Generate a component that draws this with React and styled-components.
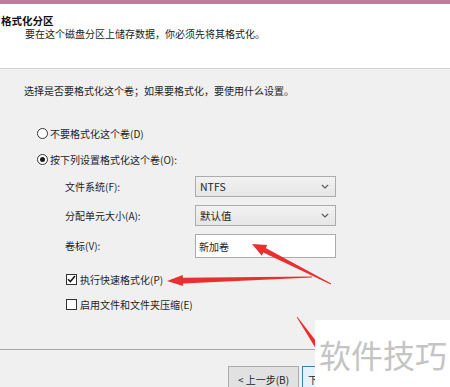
import React from "react";
import styled, { createGlobalStyle } from "styled-components";

const GlobalStyle = createGlobalStyle`
  body {
    margin: 0;
    background: #f0f0f0;
    font-family: "Noto Sans CJK SC", "Noto Sans", sans-serif;
    color: #1e1e1e;
  }
`;

// tapered arrow polygon: thin tail, thicker shaft near the head, triangle tip
function arrowPoints(tail, tip, headLen, headHalf, neckHalf, tailHalf) {
  const dx = tip[0] - tail[0];
  const dy = tip[1] - tail[1];
  const len = Math.hypot(dx, dy);
  const ux = dx / len;
  const uy = dy / len;
  const nx = -uy;
  const ny = ux;
  const bx = tip[0] - ux * headLen;
  const by = tip[1] - uy * headLen;
  const pts = [
    [tail[0] + nx * tailHalf, tail[1] + ny * tailHalf],
    [bx + nx * neckHalf, by + ny * neckHalf],
    [bx + nx * headHalf, by + ny * headHalf],
    tip,
    [bx - nx * headHalf, by - ny * headHalf],
    [bx - nx * neckHalf, by - ny * neckHalf],
    [tail[0] - nx * tailHalf, tail[1] - ny * tailHalf],
  ];
  return pts.map((p) => p.map((v) => v.toFixed(1)).join(",")).join(" ");
}

const arrows = [
  { tail: [331, 284], tip: [252, 244], head: 14, half: 6, neck: 2.6, end: 0.4 },
  { tail: [312, 277], tip: [167, 281], head: 16, half: 5.5, neck: 2.8, end: 0.4 },
  { tail: [297, 317], tip: [328, 362], head: 14, half: 6, neck: 2.6, end: 0.4 },
];

function App() {
  return (
    <Page>
      <GlobalStyle />
      <TopBar />
      <Header>
        <Title>格式化分区</Title>
        <Subtitle>要在这个磁盘分区上储存数据，你必须先将其格式化。</Subtitle>
      </Header>

      <Body>
        <Intro>选择是否要格式化这个卷；如果要格式化，要使用什么设置。</Intro>

        <RadioList>
          <RadioRow>
            <Radio />
            不要格式化这个卷(D)
          </RadioRow>
          <RadioRow>
            <Radio checked />
            按下列设置格式化这个卷(O):
          </RadioRow>
        </RadioList>

        <FormGrid>
          <Label>文件系统(F):</Label>
          <Select>
            NTFS
            <Chevron />
          </Select>
          <Label>分配单元大小(A):</Label>
          <Select>
            默认值
            <Chevron />
          </Select>
          <Label>卷标(V):</Label>
          <TextBox>新加卷</TextBox>
        </FormGrid>

        <CheckList>
          <CheckRow>
            <Check>
              <svg width="9" height="8" viewBox="0 0 9 8">
                <polyline points="1,4.2 3.4,6.6 8,1" fill="none" stroke="#1a1a1a" strokeWidth="1.6" />
              </svg>
            </Check>
            执行快速格式化(P)
          </CheckRow>
          <CheckRow>
            <Check />
            启用文件和文件夹压缩(E)
          </CheckRow>
        </CheckList>
      </Body>

      <Footer>
        <Button>&lt; 上一步(B)</Button>
        <Button primary>下</Button>
      </Footer>

      <ArrowLayer width="450" height="387" viewBox="0 0 450 387">
        {arrows.map((a, i) => (
          <polygon key={i} points={arrowPoints(a.tail, a.tip, a.head, a.half, a.neck, a.end)} fill="#e8302f" />
        ))}
      </ArrowLayer>

      <Watermark>软件技巧</Watermark>
    </Page>
  );
}

function Chevron() {
  return (
    <ChevronIcon width="8" height="5" viewBox="0 0 8 5">
      <polyline points="0.8,0.8 4,4 7.2,0.8" fill="none" stroke="#555" strokeWidth="1.2" />
    </ChevronIcon>
  );
}

export default App;

const Page = styled.div`
  position: relative;
  width: 450px;
  height: 387px;
  overflow: hidden;
  display: flex;
  flex-direction: column;
  font-size: 10px;
`;

const TopBar = styled.div`
  height: 4px;
  background: #c17a9b;
  flex: none;
`;

const Header = styled.div`
  flex: none;
  box-sizing: border-box;
  height: 65px;
  background: #fff;
  border-bottom: 1px solid #d4d4d4;
  padding: 10px 0 0 1px;
`;

const Title = styled.div`
  font-size: 10.5px;
  font-weight: 700;
  line-height: 14px;
  color: #111;
`;

const Subtitle = styled.div`
  line-height: 12px;
  padding-left: 24px;
  color: #222;
`;

const Body = styled.div`
  flex: none;
  box-sizing: border-box;
  height: 281px;
  border-bottom: 1px solid #a8a8a8;
  padding: 15px 0 0 24px;
`;

const Intro = styled.div`
  line-height: 14px;
`;

const RadioList = styled.div`
  display: flex;
  flex-direction: column;
  gap: 6px;
  margin: 25px 0 0 13px;
`;

const RadioRow = styled.div`
  display: flex;
  align-items: center;
  gap: 2px;
  height: 20px;
`;

const Radio = styled.span`
  box-sizing: border-box;
  width: 11px;
  height: 11px;
  border: 1px solid #333;
  border-radius: 50%;
  background: #fff;
  position: relative;
  &::after {
    content: "";
    display: ${(p) => (p.checked ? "block" : "none")};
    position: absolute;
    left: 2px;
    top: 2px;
    width: 5px;
    height: 5px;
    border-radius: 50%;
    background: #1a1a1a;
  }
`;

const FormGrid = styled.div`
  display: grid;
  grid-template-columns: 130px 141px;
  row-gap: 8px;
  align-items: center;
  margin: 7px 0 0 41px;
`;

const Label = styled.div`
  line-height: 14px;
`;

const Select = styled.div`
  box-sizing: border-box;
  height: 21px;
  display: flex;
  align-items: center;
  justify-content: space-between;
  padding: 0 6px 0 4px;
  border: 1px solid #acacac;
  background: linear-gradient(#f2f2f2, #e6e6e6);
  font-size: 10.5px;
`;

const ChevronIcon = styled.svg`
  flex: none;
`;

const TextBox = styled.div`
  box-sizing: border-box;
  height: 24px;
  display: flex;
  align-items: center;
  padding: 0 3px;
  border: 1px solid #acacac;
  background: #fff;
`;

const CheckList = styled.div`
  display: flex;
  flex-direction: column;
  gap: 9px;
  margin: 13px 0 0 42px;
`;

const CheckRow = styled.div`
  display: flex;
  align-items: center;
  gap: 3px;
  height: 16px;
`;

const Check = styled.span`
  box-sizing: border-box;
  width: 11px;
  height: 11px;
  border: 1px solid #333;
  background: #fff;
  display: flex;
  align-items: center;
  justify-content: center;
`;

const Footer = styled.div`
  flex: 1;
  display: flex;
  gap: 3px;
  padding: 16px 0 0 228px;
`;

const Button = styled.div`
  box-sizing: border-box;
  flex: none;
  width: 71px;
  height: 26px;
  display: flex;
  align-items: center;
  justify-content: ${(p) => (p.primary ? "flex-start" : "center")};
  padding-left: ${(p) => (p.primary ? "5px" : "0")};
  border: 1px solid ${(p) => (p.primary ? "#3c7fb1" : "#adadad")};
  background: ${(p) => (p.primary ? "#e5f1fb" : "#e1e1e1")};
`;

const ArrowLayer = styled.svg`
  position: absolute;
  left: 0;
  top: 0;
  pointer-events: none;
`;

const Watermark = styled.div`
  position: absolute;
  right: 0;
  bottom: 0;
  width: 135px;
  height: 67px;
  box-sizing: border-box;
  padding-left: 4px;
  display: flex;
  align-items: center;
  background: #fff;
  color: #c4c4c4;
  font-size: 32px;
`;
